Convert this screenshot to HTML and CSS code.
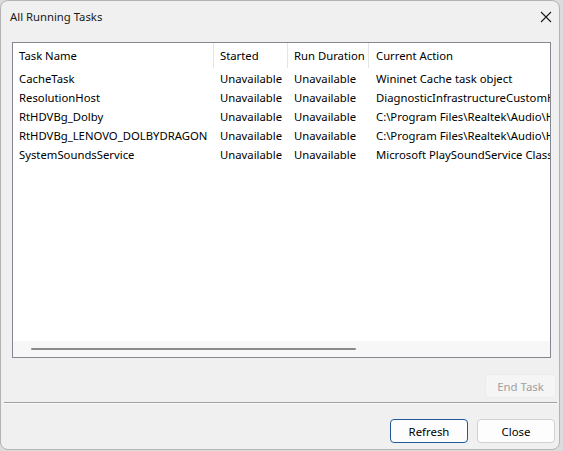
FILE: index.html
```html
<!DOCTYPE html>
<html>
<head>
<meta charset="utf-8">
<link rel="stylesheet" href="styles.css">
</head>
<body>
<div class="window">
  <div class="titlebar">
    <span class="title">All Running Tasks</span>
    <svg class="close-x" width="12" height="12" viewBox="0 0 12 12"><path d="M1 1 L11 11 M11 1 L1 11" stroke="#1a1a1a" stroke-width="1.1" fill="none"/></svg>
  </div>
  <div class="listbox">
    <div class="table">
      <div class="row header">
        <div class="cell c1">Task Name</div>
        <div class="cell c2">Started</div>
        <div class="cell c3">Run Duration</div>
        <div class="cell c4">Current Action</div>
      </div>
      <div class="row">
        <div class="cell c1">CacheTask</div>
        <div class="cell c2">Unavailable</div>
        <div class="cell c3">Unavailable</div>
        <div class="cell c4">Wininet Cache task object</div>
      </div>
      <div class="row">
        <div class="cell c1">ResolutionHost</div>
        <div class="cell c2">Unavailable</div>
        <div class="cell c3">Unavailable</div>
        <div class="cell c4">DiagnosticInfrastructureCustomHost</div>
      </div>
      <div class="row">
        <div class="cell c1">RtHDVBg_Dolby</div>
        <div class="cell c2">Unavailable</div>
        <div class="cell c3">Unavailable</div>
        <div class="cell c4">C:\Program Files\Realtek\Audio\HDA\RtkAudUService64.exe</div>
      </div>
      <div class="row">
        <div class="cell c1">RtHDVBg_LENOVO_DOLBYDRAGON</div>
        <div class="cell c2">Unavailable</div>
        <div class="cell c3">Unavailable</div>
        <div class="cell c4">C:\Program Files\Realtek\Audio\HDA\RtkAudUService64.exe</div>
      </div>
      <div class="row">
        <div class="cell c1">SystemSoundsService</div>
        <div class="cell c2">Unavailable</div>
        <div class="cell c3">Unavailable</div>
        <div class="cell c4">Microsoft PlaySoundService Class</div>
      </div>
    </div>
    <div class="hscroll"><div class="thumb"></div></div>
  </div>
  <div class="endrow">
    <button class="btn disabled">End Task</button>
  </div>
  <div class="sep"></div>
  <div class="bottomrow">
    <button class="btn default">Refresh</button>
    <button class="btn">Close</button>
  </div>
</div>
</body>
</html>
```

FILE: styles.css
```css
html, body {
  margin: 0;
  padding: 0;
}
body {
  background: #dcdcdc;
  width: 563px;
  height: 451px;
  overflow: hidden;
  font-family: "Segoe UI", "Noto Sans", sans-serif;
  font-size: 11.3px;
  color: #000;
}
.window {
  box-sizing: border-box;
  width: 560px;
  height: 450px;
  background: #f0f0f0;
  border: 1px solid #b4b4b4;
  border-radius: 8px;
  display: flex;
  flex-direction: column;
  overflow: hidden;
}
.titlebar {
  height: 32px;
  flex: none;
  display: flex;
  align-items: center;
  justify-content: space-between;
  padding: 0 7px 0 9px;
}
.title {
  font-size: 11.3px;
  color: #1a1a1a;
  margin-top: -1px;
}
.close-x {
  margin-top: -1px;
}
.listbox {
  box-sizing: border-box;
  margin: 9px 0 0 11px;
  width: 539px;
  height: 316px;
  border: 1px solid #828790;
  background: #fff;
  display: flex;
  flex-direction: column;
  overflow: hidden;
}
.table {
  flex: 1;
  overflow: hidden;
}
.row {
  display: flex;
  height: 19px;
  align-items: center;
  white-space: nowrap;
}
.row.header {
  height: 25px;
  align-items: stretch;
}
.header .cell {
  display: flex;
  align-items: center;
  border-right: 1px solid #e5e5e5;
  padding-top: 0;
  padding-bottom: 1px;
}
.header .cell.c4 { border-right: none; }
.cell {
  box-sizing: border-box;
  flex: none;
  padding-left: 6px;
  padding-top: 1px;
  overflow: hidden;
}
.c1 { width: 201px; }
.c2 { width: 74px; }
.c3 { width: 81px; }
.c4 { width: 400px; padding-left: 7px; }
.header .c4 { padding-left: 7px; }
.hscroll {
  flex: none;
  height: 16px;
  background: #f7f7f7;
  display: flex;
  align-items: center;
  padding-left: 18px;
}
.thumb {
  width: 325px;
  height: 2px;
  background: #8a8a8a;
  border-radius: 1px;
}
.endrow {
  display: flex;
  justify-content: flex-end;
  padding: 16px 3px 0 0;
}
.btn {
  box-sizing: border-box;
  font-family: "Segoe UI", "Noto Sans", sans-serif;
  font-size: 11.4px;
  height: 24px;
  border: 1px solid #d0d0d0;
  border-radius: 4px;
  background: #fdfdfd;
  color: #000;
  padding: 0;
  width: 78px;
}
.btn.disabled {
  width: 71px;
  color: #a0a0a0;
  background: #f5f5f5;
  border-color: #ebebeb;
}
.btn.default {
  border-color: #1c5d99;
}
.sep {
  margin: 4px 2px 0 3px;
  height: 1px;
  background: #a0a0a0;
  border-bottom: 1px solid #fafafa;
}
.bottomrow {
  display: flex;
  justify-content: flex-end;
  gap: 9px;
  padding: 15px 4px 0 0;
}
```
